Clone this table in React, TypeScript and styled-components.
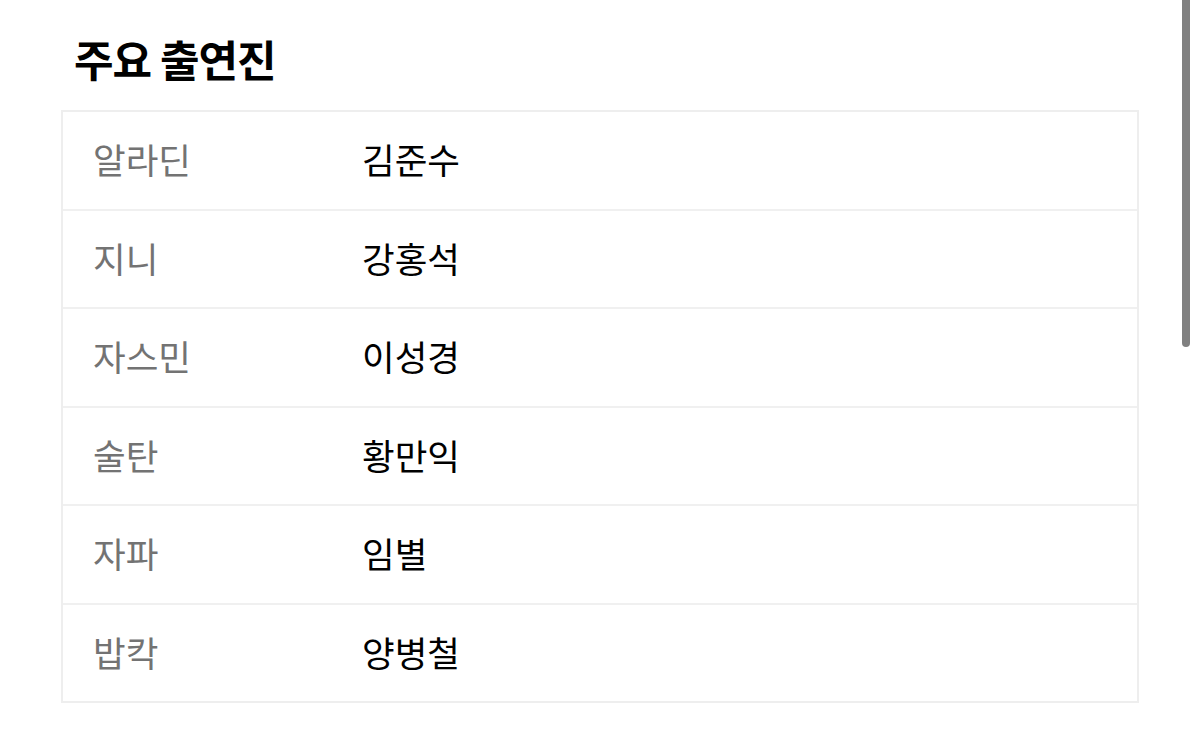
import React from "react";
import styled, { createGlobalStyle } from "styled-components";

const Global = createGlobalStyle`
  html, body { margin: 0; padding: 0; background: #fff; }
  body { font-family: "Noto Sans CJK KR", "Noto Sans", sans-serif; overflow: hidden; }
`;

const Page = styled.div`
  position: relative;
  width: 1200px;
  height: 751px;
  padding: 30px 61px 0 61px;
  box-sizing: border-box;
`;

const Title = styled.h2`
  margin: 0 0 24px 13px;
  font-size: 43px;
  font-weight: 700;
  line-height: 56px;
  color: #000;
  letter-spacing: -1px;
`;

const Table = styled.div`
  border: 2px solid #eeeeee;
  display: flex;
  flex-direction: column;
`;

const Row = styled.div<{ $last?: boolean }>`
  display: grid;
  grid-template-columns: 269px 1fr;
  align-items: center;
  height: 96.5px;
  padding-left: 30px;
  border-bottom: ${(p) => (p.$last ? "none" : "2px solid #f0f0f0")};
`;

const Role = styled.span`
  font-size: 35.5px;
  color: #737373;
  line-height: 1;
  margin-top: -3px;
`;

const Actor = styled.span`
  font-size: 35.5px;
  color: #000;
  line-height: 1;
  margin-top: -3px;
`;

const Scrollbar = styled.div`
  position: absolute;
  top: -4px;
  right: 10px;
  width: 8px;
  height: 351px;
  border-radius: 4px;
  background: #808080;
`;

const cast: [string, string][] = [
  ["알라딘", "김준수"],
  ["지니", "강홍석"],
  ["자스민", "이성경"],
  ["술탄", "황만익"],
  ["자파", "임별"],
  ["밥칵", "양병철"],
];

export default function App() {
  return (
    <>
      <Global />
      <Page>
        <Title>주요 출연진</Title>
        <Table>
          {cast.map(([role, actor], i) => (
            <Row key={role} $last={i === cast.length - 1}>
              <Role>{role}</Role>
              <Actor>{actor}</Actor>
            </Row>
          ))}
        </Table>
        <Scrollbar />
      </Page>
    </>
  );
}
